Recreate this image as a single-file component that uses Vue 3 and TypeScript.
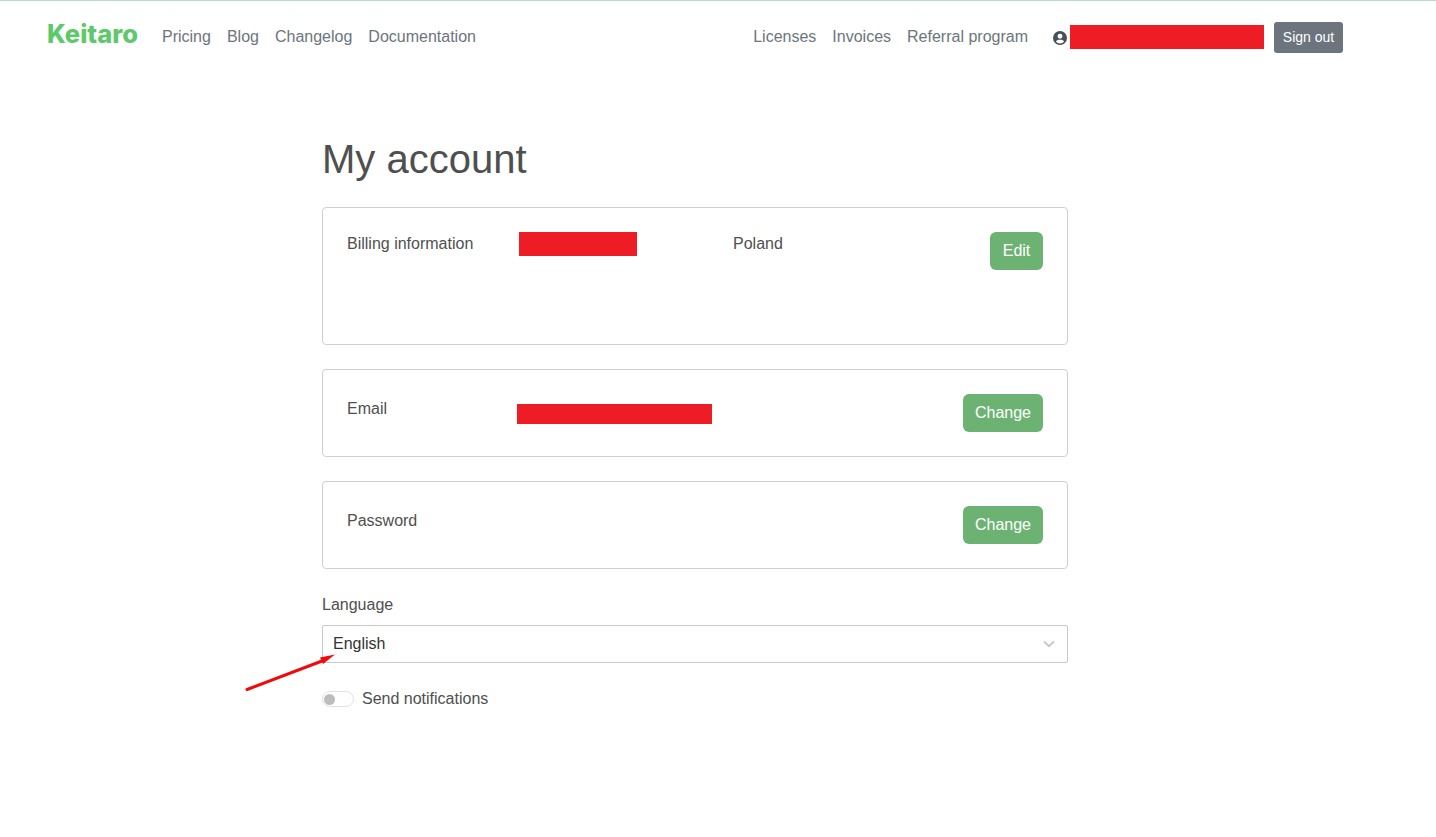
<script setup lang="ts">
const leftLinks: string[] = ['Pricing', 'Blog', 'Changelog', 'Documentation']
const rightLinks: string[] = ['Licenses', 'Invoices', 'Referral program']
</script>

<template>
  <div class="page">
    <header class="nav">
      <a class="logo">Keitaro</a>
      <nav class="links">
        <a v-for="l in leftLinks" :key="l" class="link">{{ l }}</a>
      </nav>
      <nav class="links right">
        <a v-for="l in rightLinks" :key="l" class="link">{{ l }}</a>
      </nav>
      <svg class="user" viewBox="0 0 16 16" width="14" height="14">
        <path fill="#495057" fill-rule="evenodd" d="M8 0a8 8 0 1 0 0 16A8 8 0 0 0 8 0Zm0 3.2a2.8 2.8 0 1 1 0 5.6 2.8 2.8 0 0 1 0-5.6ZM8 14.2a6.2 6.2 0 0 1-4.7-2.2c.5-1.3 2.5-2 4.7-2s4.2.7 4.7 2A6.2 6.2 0 0 1 8 14.2Z"/>
      </svg>
      <span class="redact nav-redact"></span>
      <button class="signout">Sign out</button>
    </header>

    <main class="main">
      <h1 class="title">My account</h1>

      <section class="card billing">
        <span class="label">Billing information</span>
        <span class="redact billing-redact"></span>
        <span class="country">Poland</span>
        <button class="btn">Edit</button>
      </section>

      <section class="card">
        <span class="label low">Email</span>
        <span class="redact email-redact"></span>
        <button class="btn">Change</button>
      </section>

      <section class="card">
        <span class="label low">Password</span>
        <button class="btn">Change</button>
      </section>

      <div class="lang-label">Language</div>
      <div class="select">
        <span>English</span>
        <svg class="chev" viewBox="0 0 12 8" width="12" height="8">
          <path d="M1 1.500 6 6.200 11 1.500" fill="none" stroke="#c8c8c8" stroke-width="2"/>
        </svg>
      </div>

      <div class="notify">
        <span class="toggle"><span class="knob"></span></span>
        <span>Send notifications</span>
      </div>
    </main>

    <svg class="arrow" viewBox="0 0 100 45" width="100" height="45">
      <path d="M2 39.500 77 11" stroke="#f00a0a" stroke-width="3" fill="none" stroke-linecap="round"/>
      <path d="M90 4.500 75 7.500 78 14Z" fill="#f00a0a"/>
    </svg>
  </div>
</template>

<style>
html, body { margin: 0; background: #fff; }
</style>

<style scoped>
.page {
  position: relative;
  height: 837px;
  overflow: hidden;
  border-top: 1px solid #b5dfc0;
  box-sizing: border-box;
  font-family: "Liberation Sans", Arial, sans-serif;
  font-size: 16px;
  line-height: 24px;
  color: #4f4f4f;
  background: #fff;
}
.nav {
  display: flex;
  align-items: center;
  height: 71px;
  padding-left: 47px;
}
.logo {
  width: 91px;
  margin-top: -5px;
  font-family: "Inter", sans-serif;
  font-weight: 800;
  font-size: 25.5px;
  line-height: 32px;
  color: #5ec96a;
  white-space: nowrap;
}
.links {
  display: flex;
  gap: 16px;
  margin-left: 24px;
  margin-top: 1px;
}
.links.right {
  margin-left: auto;
}
.link {
  color: #6c757d;
  white-space: nowrap;
}
.user {
  margin-left: 25px;
  margin-top: 3px;
  flex: none;
}
.redact {
  display: block;
  flex: none;
  background: #ee1c25;
}
.nav-redact {
  width: 194px;
  height: 24px;
  margin-left: 3px;
  margin-top: 1px;
}
.signout {
  width: 69px;
  height: 31px;
  margin-left: 10px;
  margin-right: 93px;
  margin-top: 1px;
  padding: 0;
  border: none;
  border-radius: 3px;
  background: #6c757d;
  color: #fff;
  font-family: inherit;
  font-size: 14px;
}
.main {
  width: 746px;
  margin-left: 322px;
}
.title {
  margin: 60px 0 21px;
  font-size: 40px;
  line-height: 54px;
  font-weight: 400;
  color: #4f4f4f;
}
.card {
  display: flex;
  align-items: flex-start;
  box-sizing: border-box;
  height: 88px;
  margin-bottom: 24px;
  padding: 24px;
  border: 1px solid #cfcfcf;
  border-radius: 4px;
}
.card.billing {
  height: 138px;
}
.label {
  flex: none;
  width: 170px;
}
.label.low {
  margin-top: 3px;
}
.billing-redact {
  width: 118px;
  height: 24px;
  margin-left: 2px;
}
.email-redact {
  width: 195px;
  height: 20px;
  margin-top: 10px;
}
.country {
  margin-left: 96px;
}
.btn {
  margin-left: auto;
  height: 38px;
  min-width: 53px;
  padding: 0 12px;
  border: none;
  border-radius: 6px;
  background: #6cb373;
  color: #fff;
  font-family: inherit;
  font-size: 16px;
}
.lang-label {
  margin-bottom: 8px;
}
.select {
  display: flex;
  align-items: center;
  justify-content: space-between;
  box-sizing: border-box;
  height: 38px;
  padding: 0 12px 0 10px;
  border: 1px solid #c8c8c8;
  border-radius: 2px;
  color: #333;
}
.notify {
  display: flex;
  align-items: center;
  gap: 8px;
  margin-top: 24px;
}
.toggle {
  display: flex;
  align-items: center;
  box-sizing: border-box;
  width: 32px;
  height: 16px;
  padding-left: 1px;
  border: 1px solid #dee2e6;
  border-radius: 8px;
}
.knob {
  width: 11px;
  height: 11px;
  border-radius: 50%;
  background: #bdbdbd;
}
.arrow {
  position: absolute;
  left: 245px;
  top: 649px;
}
</style>
